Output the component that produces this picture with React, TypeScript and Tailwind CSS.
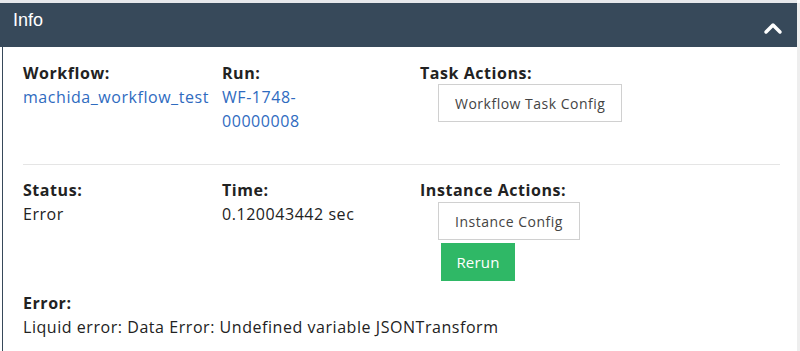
import React from "react";

export default function App() {
  const f = { fontFamily: "'Open Sans', Lato, sans-serif" };
  return (
    <div className="w-[800px] h-[351px] bg-white overflow-hidden relative">
      <div className="h-[3px] bg-[#e6e8eb] w-[797px]" />
      <div className="flex">
        <div className="w-[797px] flex flex-col">
          <div className="h-[44px] bg-[#37495a] flex items-center justify-between pl-[13px] pr-[14px]">
            <span className="text-white text-[18px] -mt-[10px]" style={{ fontFamily: "'Liberation Sans', Arial, sans-serif" }}>Info</span>
            <svg width="20" height="14" viewBox="0 0 20 14" className="mt-[6px]">
              <path d="M3 11 L10 4 L17 11" stroke="white" strokeWidth="3.5" fill="none" strokeLinecap="round" strokeLinejoin="round" />
            </svg>
          </div>
          <div className="border-l border-[#37495a] ml-[2px] h-[304px] pl-[20px] pr-[17px] pt-[14px] text-[16px] tracking-[0.55px] text-[#222]" style={f}>
            <div className="flex">
              <div className="w-[199px]">
                <div className="font-bold leading-[24px]">Workflow:</div>
                <div className="text-[#2f6bbf] leading-[24px]">machida_workflow_test</div>
              </div>
              <div className="w-[198px]">
                <div className="font-bold leading-[24px]">Run:</div>
                <div className="text-[#2f6bbf] leading-[24px]">WF-1748-<br />00000008</div>
              </div>
              <div>
                <div className="font-bold leading-[24px]">Task Actions:</div>
                <button className="ml-[18px] mt-[-1px] h-[38px] px-[16px] border border-[#d0d0d0] bg-white text-[14px] tracking-[0.5px] text-[#444]">Workflow Task Config</button>
              </div>
            </div>
            <div className="h-px bg-[#e5e5e5] mt-[31px] mb-[13px]" />
            <div className="flex">
              <div className="w-[199px]">
                <div className="font-bold leading-[24px]">Status:</div>
                <div className="leading-[24px]">Error</div>
              </div>
              <div className="w-[198px]">
                <div className="font-bold leading-[24px]">Time:</div>
                <div className="leading-[24px]">0.120043442 sec</div>
              </div>
              <div className="flex flex-col items-start">
                <div className="font-bold leading-[24px]">Instance Actions:</div>
                <button className="ml-[18px] h-[38px] px-[16px] border border-[#d0d0d0] bg-white text-[14px] tracking-[0.5px] text-[#444]">Instance Config</button>
                <button className="ml-[21px] mt-[3px] h-[38px] w-[74px] bg-[#2fb866] text-white text-[15px] tracking-[0.2px]">Rerun</button>
              </div>
            </div>
            <div className="mt-[10px]">
              <div className="font-bold leading-[24px]">Error:</div>
              <div className="leading-[24px]">Liquid error: Data Error: Undefined variable JSONTransform</div>
            </div>
          </div>
        </div>
        <div className="flex-1 bg-[#eeeeee]" />
      </div>
    </div>
  );
}
